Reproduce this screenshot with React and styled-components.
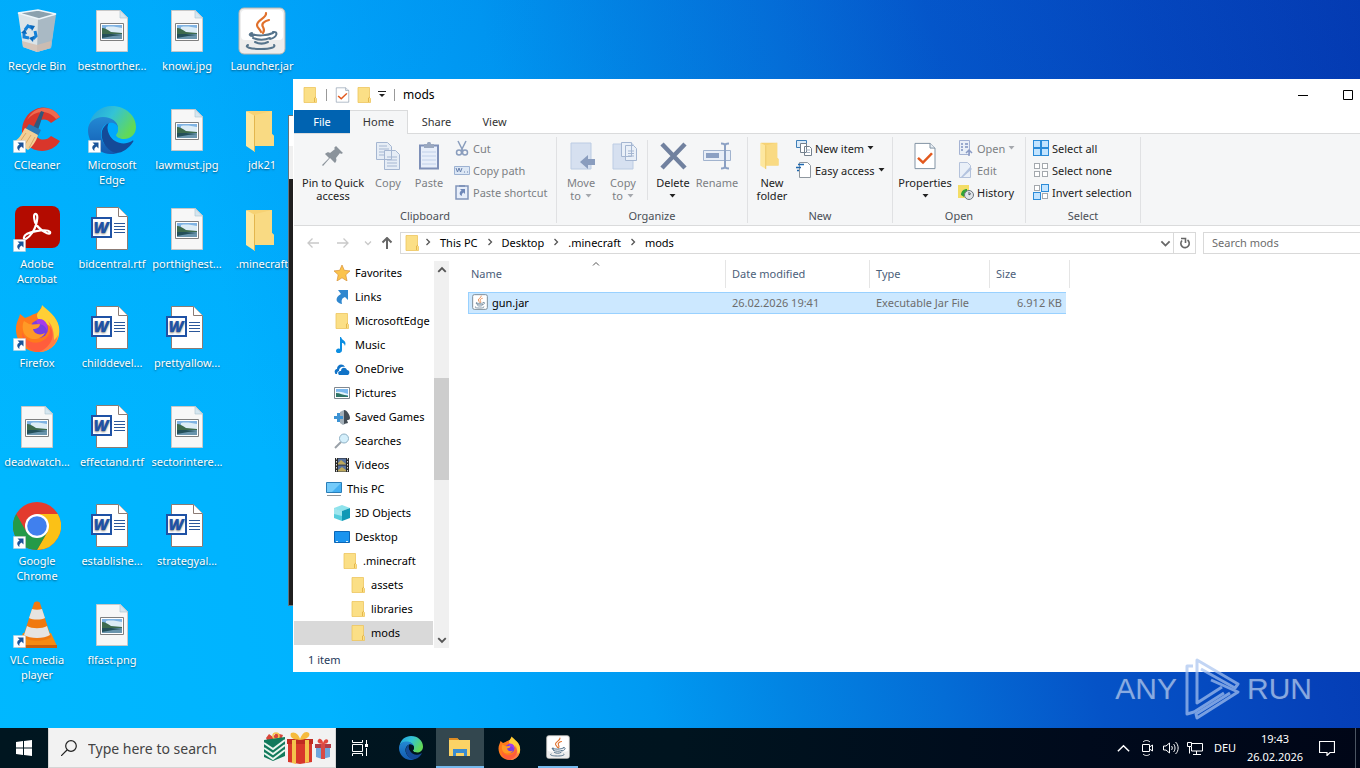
import styled, { createGlobalStyle } from "styled-components";

const GlobalStyle = createGlobalStyle`
    * {
        box-sizing: border-box;
    }

    body {
        margin: 0;
        overflow: hidden;
        font-family: "Noto Sans", "Open Sans", sans-serif;
        font-size: 11px;
        color: #000;
    }

    button, input {
        margin: 0;
        padding: 0;
        border: 0;
        background: none;
        font: inherit;
        color: inherit;
    }

    svg {
        display: block;
        flex: none;
    }
`

const Screen = styled.div`
    display: flex;
    flex-direction: column;
    height: 100vh;
    background:
        linear-gradient(180deg, rgba(0, 110, 225, 0.12) 0%, rgba(0, 110, 225, 0) 60%),
        linear-gradient(76deg, #00b8ff 0%, #00b3ff 22%, #00a7fb 33%, #009af2 43%, #0284e3 52%, #046dd6 62%, #0553c7 72%, #0541b9 86%, #0434ac 100%);
`

const Desktop = styled.main`
    position: relative;
    flex: 1;
    display: flex;
    min-height: 0;
    overflow: hidden;
`

const IconColumn = styled.div`
    display: flex;
    flex-direction: column;
    width: 75px;
    padding-right: 1px;
`

const Shortcut = styled.button`
    display: flex;
    flex-direction: column;
    align-items: center;
    gap: 3px;
    height: 99px;
    padding-top: 7px;
    color: #fff;
    line-height: 15px;
    text-align: center;
    text-shadow: 0 1px 2px rgba(0, 0, 0, 0.5);
`

const ShortcutLabel = styled.span`
    max-width: 75px;
`

/* Windows */

const ConsoleWindow = styled.section`
    position: absolute;
    top: 115px;
    left: 288px;
    width: 480px;
    height: 491px;
    display: flex;
    flex-direction: column;
    border: 1px solid #5f7580;
    background: #1f1f1f;
`

const ConsoleTitle = styled.div`
    height: 30px;
    background: #fff;
`

const ConsoleTabs = styled.div`
    height: 33px;
    background: #f0f0f0;
`

const ExplorerWindow = styled.section`
    position: absolute;
    top: 79px;
    left: 293px;
    right: -11px;
    bottom: 56px;
    display: flex;
    flex-direction: column;
    padding-left: 1px;
    background: #fff;
`

const TitleBar = styled.header`
    display: flex;
    align-items: center;
    height: 31px;
    padding-left: 8px;
    font-size: 12px;
`

const QuickAccess = styled.div`
    display: flex;
    align-items: center;
    flex: 1;
    gap: 6px;
`

const Bar = styled.span`
    width: 1px;
    height: 12px;
    margin: 0 2px;
    background: #999;
`

const WindowTitle = styled.h1`
    margin: 0;
    font-size: 12px;
    font-weight: 400;
`

const CaptionButton = styled.button`
    display: flex;
    align-items: center;
    justify-content: center;
    width: 45px;
    height: 31px;
    padding-right: 2px;
`

const Tabs = styled.nav`
    display: flex;
    height: 24px;
    border-bottom: 1px solid #dadbdc;
`

const Tab = styled.button`
    width: ${(props) => (props.$file ? 56 : 58)}px;
    height: ${(props) => (props.$active ? 24 : 23)}px;
    padding-bottom: ${(props) => (props.$active ? 3 : 1)}px;
    color: ${(props) => (props.$file ? "#fff" : "#333")};
    background: ${(props) => (props.$file ? "#0063b1" : props.$active ? "#f5f6f7" : "none")};
    border: solid ${(props) => (props.$active ? "#dadbdc" : "transparent")};
    border-width: ${(props) => (props.$file ? "0" : "1px 1px 0 0")};
`

const Ribbon = styled.div`
    display: flex;
    height: 92px;
    padding-top: 3px;
    background: #f5f6f7;
    border-bottom: 1px solid #dadbdc;
`

const Group = styled.section`
    display: flex;
    flex-direction: column;
    flex: none;
    width: ${(props) => props.$width}px;
    height: 86px;
    border-right: 1px solid #e0e1e3;
`

const GroupTools = styled.div`
    display: flex;
    flex: 1;
    padding-left: ${(props) => props.$indent || 0}px;
`

const GroupName = styled.div`
    line-height: 14px;
    color: #4a4f56;
    text-align: center;
`

const BigButton = styled.button`
    display: flex;
    flex-direction: column;
    align-items: center;
    flex: none;
    gap: 6px;
    width: ${(props) => props.$width}px;
    height: 68px;
    padding-top: 5px;
    line-height: 13px;
    color: ${(props) => (props.disabled ? "#7c7f84" : "#222")};
`

const ToolDivider = styled.span`
    width: 1px;
    height: 60px;
    margin: 3px;
    background: #e0e1e3;
`

const SmallTools = styled.div`
    display: flex;
    flex-direction: column;
    align-items: flex-start;
    padding-left: ${(props) => props.$indent || 0}px;
`

const SmallButton = styled.button`
    display: flex;
    align-items: center;
    gap: 3px;
    height: 22px;
    white-space: nowrap;
    color: ${(props) => (props.disabled ? "#7c7f84" : "#222")};
`

const LabelStack = styled.span`
    display: flex;
    flex-direction: column;
    align-items: center;
`

const LabelLine = styled.span`
    display: flex;
    align-items: center;
    gap: 4px;
    height: 13px;
`

const AddressRow = styled.div`
    display: flex;
    align-items: center;
    height: 34px;
    padding-left: 7px;
`

const NavButton = styled.button`
    display: flex;
    align-items: center;
    justify-content: center;
    width: ${(props) => props.$width}px;
    height: 22px;
`

const PathBox = styled.div`
    display: flex;
    align-items: center;
    flex: 1;
    height: 22px;
    margin-left: 2px;
    padding-left: 3px;
    border: 1px solid #d9d9d9;
`

const Crumbs = styled.div`
    display: flex;
    align-items: center;
    flex: 1;
    gap: 8px;
    padding: 0 0 2px 4px;
`

const RefreshButton = styled(NavButton)`
    border-left: 1px solid #d9d9d9;
    height: 20px;
`

const SearchMods = styled.input`
    width: 168px;
    height: 22px;
    margin-left: 7px;
    padding: 0 0 2px 8px;
    border: 1px solid #d9d9d9;
    outline: 0;

    &::placeholder {
        color: #6d6d6d;
        opacity: 1;
    }
`

const Content = styled.div`
    display: flex;
    flex: 1;
    min-height: 0;
`

const Tree = styled.ul`
    width: 139px;
    margin: 0;
    padding: 1px 0 0;
    overflow: hidden;
    list-style: none;
`

const TreeItem = styled.li`
    display: flex;
    align-items: center;
    gap: 5px;
    height: 24px;
    padding-bottom: 1px;
    padding-left: ${(props) => 32 + props.$level * 8}px;
    line-height: 15px;
    white-space: nowrap;
    background: ${(props) => (props.$selected ? "#d9d9d9" : "none")};
`

const ScrollBar = styled.div`
    display: flex;
    flex-direction: column;
    align-items: center;
    width: 15px;
    margin: 1px 19px 0 1px;
    background: #f0f0f0;
`

const ScrollArrow = styled.button`
    display: flex;
    align-items: center;
    justify-content: center;
    width: 15px;
    height: 17px;
`

const ScrollTrack = styled.div`
    display: grid;
    grid-template-rows: 100fr 102fr 151fr;
    flex: 1;
    width: 15px;
`

const ScrollThumb = styled.div`
    grid-row: 2;
    background: #cdcdcd;
`

const FileTable = styled.table`
    align-self: flex-start;
    table-layout: fixed;
    width: 602px;
    border-spacing: 0;
    text-align: left;
`

const HeadCell = styled.th`
    position: relative;
    height: 28px;
    padding: 0 0 2px ${(props) => props.$pad || 6}px;
    border-right: 1px solid #e5e5e5;
    font-weight: 400;
    color: #4c607a;
`

const SortMark = styled.span`
    position: absolute;
    top: 0;
    left: 50%;
    margin-left: -5px;
`

const Spacer = styled.tr`
    height: 4px;
`

const Cell = styled.td`
    height: 22px;
    padding: 0 4px 2px 6px;
    border: solid #99d1ff;
    border-width: 1px 0;
    background: #cce8ff;
    color: #6d6d6d;
    text-align: ${(props) => (props.$right ? "right" : "left")};
`

const NameCell = styled(Cell)`
    padding-left: 3px;
    border-left-width: 1px;
    color: #000;
`

const FileName = styled.div`
    display: flex;
    align-items: center;
    gap: 4px;
`

const StatusBar = styled.footer`
    height: 24px;
    padding-left: 14px;
    line-height: 23px;
    color: #1e395b;
`

const Watermark = styled.div`
    position: absolute;
    right: 48px;
    bottom: 6px;
    display: flex;
    align-items: center;
    gap: 6px;
    font-family: "Liberation Sans", sans-serif;
    font-size: 30px;
    line-height: 66px;
    color: rgba(185, 208, 245, 0.7);
    text-shadow: 0 0 2px rgba(120, 130, 150, 0.3);
`

/* Taskbar */

const Taskbar = styled.footer`
    display: flex;
    height: 40px;
    color: #fff;
    background: linear-gradient(90deg, #001620 0%, #00141f 50%, #000a1c 80%, #000617 100%);
`

const TaskButton = styled.button`
    display: flex;
    align-items: center;
    justify-content: center;
    width: 48px;
    height: 40px;
    margin-right: ${(props) => props.$gap || 0}px;
    background: ${(props) => (props.$active ? "#33474f" : "none")};
    border-bottom: ${(props) => (props.$active ? "2px solid #76b9ed" : 0)};
`

const RunningButton = styled(TaskButton)`
    width: 40px;
    margin-left: 5px;
    border-bottom: 2px solid #76b9ed;
`

const TaskSearch = styled.label`
    display: flex;
    align-items: center;
    gap: 11px;
    width: 288px;
    padding: 0 4px 0 12px;
    border: 1px solid #d5d5d5;
    border-top-color: #f2f2f2;
    background: #f2f2f2;
`

const TaskSearchInput = styled.input`
    flex: 1;
    min-width: 0;
    font-size: 14px;
    outline: 0;

    &::placeholder {
        color: #444;
        opacity: 1;
    }
`

const Tray = styled.div`
    display: flex;
    align-items: center;
    margin-left: auto;
`

const TrayButton = styled.button`
    display: flex;
    align-items: center;
    justify-content: center;
    width: ${(props) => props.$width}px;
    height: 40px;
    line-height: 18px;
`

const ShowDesktop = styled.button`
    width: 5px;
    height: 40px;
    margin-left: 8px;
    border-left: 1px solid #4b5562;
`

/* Icons */

const LinkArrow = () => (
    <g transform="translate(0 34)">
        <path d="M.5.5h12v12H.5z" fill="#fff" stroke="#c5ccd2" strokeWidth=".5" />
        <path d="M4.500 2.500h6v6l-2-2c-2 1.500-2.500 2.500-2 4.500-3-2-3-5 0-6.500z" fill="#1b5499" />
    </g>
)

const RecycleBin = () => (
    <svg width="48" height="48" viewBox="0 0 48 48">
        <path d="M5 6l5 34 14 5 14-4 4-33-17 3z" fill="#dbe4e8" />
        <path d="M25 11l-1 34 14-4 5-33z" fill="#a9b9c4" />
        <path d="M9 34l15 4 14-4-1 7-13 4-14-5z" fill="#d3bdae" opacity=".8" />
        <path d="M5 6l20-3 18 4-17 5z" fill="#8ba1ae" stroke="#eef6fa" strokeWidth="1.500" />
        <g fill="none" stroke="#1481d8" strokeWidth="3">
            <path d="M12 23l3-4 4 2M22 24l1 5-3 3M16 31l-5-1v-5" />
        </g>
        <path d="M17 18l5 1-3 5zM20 35l-4-4 5-2zM8 26l4-4 2 5z" fill="#0a69bd" />
    </svg>
)

const PhotoFile = () => (
    <svg width="48" height="48" viewBox="0 0 48 48">
        <path d="M8.500 3.500h24l7 7v34h-31z" fill="#f7f7f7" stroke="#c8c8c8" />
        <path d="M32 3.500v7.500h7.500z" fill="#d5e6f0" stroke="#b3c7d2" strokeWidth=".7" />
        <path d="M12.500 16.500h23v17h-23z" fill="#fff" stroke="#7f7f7f" />
        <path d="M14 18h20v14H14z" fill="#7fb3e3" />
        <path d="M18 20c5-1 11 0 16 1v5H18z" fill="#dcecf6" />
        <path d="M14 21c3 0 6 2 9 4l11 1v2H14z" fill="#3d6a4d" />
        <path d="M14 27h20v5H14z" fill="#6b95ad" />
        <path d="M14 27h9l11 1-9 1-11 2z" fill="#234f59" />
    </svg>
)

const WordFile = () => (
    <svg width="48" height="48" viewBox="0 0 48 48">
        <path d="M8.500 2.500h22l9 9v33h-31z" fill="#fff" stroke="#8b7b74" />
        <path d="M30.500 2.500v9h9" fill="#fff" stroke="#8b7b74" />
        <path d="M26 18.500h11M26 21.500h11M26 24.500h11M26 27.500h11" stroke="#2b579a" strokeWidth="1.100" />
        <path d="M4 13h19v19H4z" fill="#fff" stroke="#1f52a5" strokeWidth="2" />
        <text x="13" y="28" textAnchor="middle" fontFamily="Open Sans" fontSize="16" fontWeight="800" fontStyle="italic" fill="#1f52a5">W</text>
    </svg>
)

const JavaArt = () => (
    <g fill="none" strokeLinecap="round">
        <path d="M28 6c1 5-9 7-9 12 0 3 3 4 4 7M31 13c-5 1-8 4-6 7 1 2 2 3 0 6" stroke="#e0702b" strokeWidth="2.200" />
        <path d="M13 27c6 2 16 2 22-1M14 26c-4 1-2 3 1 3M15 31c5 2 12 2 17 0M17 35c4 2 9 2 13 0M35 25c5-1 5 5-3 7M10 38c-4 2 2 4 13 4 10 0 15-2 13-4" stroke="#56748c" strokeWidth="2" />
    </g>
)

const JavaIcon = ({ size = 48 }) => (
    <svg width={size} height={size} viewBox="0 0 48 48">
        <rect x="1" y="1" width="46" height="46" rx="5" fill="#ededed" stroke="#b9b4ae" />
        <rect x="3" y="3" width="42" height="30" rx="4" fill="#fff" />
        <JavaArt />
    </svg>
)

const JarFile = () => (
    <svg width="16" height="16" viewBox="0 0 48 48">
        <rect x="2" y="2" width="44" height="44" rx="5" fill="#fff" stroke="#7d8d99" strokeWidth="3" />
        <JavaArt />
    </svg>
)

const CCleaner = () => (
    <svg width="48" height="48" viewBox="0 0 48 48">
        <path d="M47 11l-9 6c-6-7-17-3-17 7 0 9 11 13 17 6l9 5c-7 12-24 13-33 4C5 30 8 9 23 3c9-4 19 0 24 8z" fill="#d9362b" />
        <path d="M47 11l-4 2C35 3 22 4 14 14 18 6 24 2 31 2c7 0 12 3 16 9z" fill="#ee6a50" />
        <path d="M28 5l3 1-6 18-5-2z" fill="#31587c" />
        <path d="M16 18l12 6-3 6-13-6z" fill="#2b7ab8" />
        <path d="M12 22l13 7c-2 7-6 12-10 15L2 35c5-3 7-8 10-13z" fill="#f3cf95" />
        <path d="M13 27L6 37M18 29l-7 11M22 31l-6 11" stroke="#d8a868" strokeWidth="1" />
        <LinkArrow />
    </svg>
)

const EdgeIcon = ({ size = 48, link, hole = "#00a8fd" }) => (
    <svg width={size} height={size} viewBox="0 0 48 48">
        <defs>
            <linearGradient id="edgeTop" x1="0" y1="0" x2="1" y2=".5">
                <stop offset="0" stopColor="#1f9fe0" />
                <stop offset=".5" stopColor="#33c3d6" />
                <stop offset="1" stopColor="#62d957" />
            </linearGradient>
            <linearGradient id="edgeSide" x1="0" y1="0" x2="0" y2="1">
                <stop offset="0" stopColor="#2389d4" />
                <stop offset="1" stopColor="#135ab0" />
            </linearGradient>
        </defs>
        <path d="M1 20C3 7 13 0 24 0c14 0 24 10 24 21 0 8-6 12-12 12-5 0-8-2-8-4 0-1 2-2 2-6 0-6-6-11-14-11C8 12 3 15 1 20z" fill="url(#edgeTop)" />
        <path d="M0 24c0-8 7-13 15-13 9 0 15 5 15 11-1-3-4-5-8-5-5 0-9 5-9 11 0 9 7 16 17 19-3 1-6 1-8 1C9 47 0 36 0 24z" fill="url(#edgeSide)" />
        <path d="M14 25c1-4 4-7 7-8-2 3-2 7 0 11 4 9 15 12 23 7 1-1 2 0 1 1-4 6-10 11-17 11-8-2-16-11-14-22z" fill="#144a98" />
        <path d="M21 17c5-1 9 2 9 6 0 4-2 5-2 6 0 2 3 4 8 4-6 2-12-1-15-6-1-4-2-7 0-10z" fill={hole} />
        {link && <LinkArrow />}
    </svg>
)

const Acrobat = () => (
    <svg width="48" height="48" viewBox="0 0 48 48">
        <rect x="2" y="1" width="45" height="42" rx="8" fill="#b30b00" />
        <path d="M22 9c5-1 1 14-3 19-4 6-9 8-8 4 1-5 23-9 26-5 2 5-12-2-15-10-1-4-2-7 0-8z" fill="none" stroke="#fff" strokeWidth="2.200" />
        <LinkArrow />
    </svg>
)

const FirefoxIcon = ({ size = 48, link }) => (
    <svg width={size} height={size} viewBox="0 0 48 48">
        <path d="M3 25c0-7 3-10 4-15l5 4 5-2c5-3 9-2 12-10 4 4 5 7 10 9 6 5 8 13 7 20-2 11-11 17-21 17C12 48 3 38 3 25z" fill="#ff7a1c" />
        <path d="M29 1c5 5 15 11 17 22 2 13-7 25-20 25 10-4 17-14 12-24-3-6-14-6-14-12 0-5 5-6 5-11z" fill="#ffcf35" />
        <path d="M35 17c5 9 1 18-8 21-9 3-18-4-18-12 0 15 8 22 17 22 10 0 18-7 19-17-2 4-4 5-4 5 0-7-1-14-6-19z" fill="#ff4a52" opacity=".6" />
        <circle cx="26" cy="25" r="9" fill="#7a3ee0" />
        <path d="M16 20c4 1 7 0 11 0 0 3-3 5-7 5 1 5 7 7 12 4-5 9-20 8-22-3-1-6 1-9 1-9z" fill="#ff9a26" />
        <path d="M25 15c8-1 11 7 9 13 0-4-3-8-9-8-2-2-2-4 0-5z" fill="#a53bea" />
        {link && <LinkArrow />}
    </svg>
)

const ChromeIcon = () => (
    <svg width="48" height="48" viewBox="0 0 48 48">
        <circle cx="24" cy="24" r="24" fill="#e33b2e" />
        <path d="M24 12h20.800A24 24 0 0124 48l10.400-18z" fill="#fbc116" />
        <path d="M3.200 12L13.600 30 24 36l10.400-6L24 48A24 24 0 013.200 12z" fill="#249a48" />
        <circle cx="24" cy="24" r="12" fill="#fff" />
        <circle cx="24" cy="24" r="9.800" fill="#4080ee" />
        <LinkArrow />
    </svg>
)

const VlcIcon = () => (
    <svg width="48" height="48" viewBox="0 0 48 48">
        <path d="M10 32h28l6 13H5z" fill="#f58a12" />
        <path d="M5 44h39v3H5z" fill="#c95f0b" />
        <path d="M21 2c1-2 5-2 6 0l11 34c-5 5-23 5-28 0z" fill="#f0790f" />
        <path d="M19 8c3 1 7 1 10 0l3 9c-4 2-12 2-16 0zM14 25c5 3 15 3 20 0l3 9c-6 4-20 4-26 0z" fill="#e6e4e1" />
        <LinkArrow />
    </svg>
)

const BigFolder = ({ width = 48, height = 48, viewBox = "0 0 48 48" }) => (
    <svg width={width} height={height} viewBox={viewBox}>
        <path d="M9 5h25v23l2 2v10H15z" fill="#f6d274" />
        <path d="M34 5v23l2 2v10H17V9z" fill="#f9da83" />
        <path d="M8 5l9 5v36l-9-6z" fill="#fde79f" />
        <path d="M17 10v36l-1-1V9z" fill="#e3b64d" />
    </svg>
)

const Folder = () => (
    <svg width="16" height="16" viewBox="0 0 16 16">
        <path d="M2 .5h11.500v10l1 1v4H2z" fill="#fbdf86" stroke="#edc55e" strokeWidth=".8" />
        <path d="M12.500 15v-4l1.500-1" fill="none" stroke="#dfad3e" strokeWidth=".8" />
    </svg>
)

const CheckPage = ({ width = 16, height = 16 }) => (
    <svg width={width} height={height} viewBox="0 0 24 30" preserveAspectRatio="none">
        <path d="M2 1.500h15l5 5v22H2z" fill="#fff" stroke="#7d8fa1" />
        <path d="M17 1.500v5h5" fill="#e8eef4" stroke="#7d8fa1" />
        <path d="M5 17l5 5 9-10" fill="none" stroke="#e2581d" strokeWidth="2.500" />
    </svg>
)

const Caret = ({ light }) => (
    <svg width="7" height="4" viewBox="0 0 7 4">
        <path d="M.5 0h6l-3 3.500z" fill={light ? "#a5a8ad" : "#222"} />
    </svg>
)

const PinIcon = () => (
    <svg width="28" height="28" viewBox="0 0 28 28">
        <path d="M17 4l7 7-2 1-1-1-4 5c1 2 0 4-1 5l-5-5-7 8-1-1 7-7-4-4c2-2 4-2 5-1l5-4-1-1z" fill="#8b939b" />
    </svg>
)

const CopyIcon = () => (
    <svg width="28" height="28" viewBox="0 0 28 28">
        <g fill="#e6edf6" stroke="#a5b6d1">
            <path d="M2.500.500h11l4 4v13h-15zM10.500 8.500h11l4 4v15h-15z" />
            <path d="M5 4h8M5 7h10M5 10h5M5 13h5M13 15h10M13 18h10M13 21h10M13 24h10" />
        </g>
    </svg>
)

const PasteIcon = () => (
    <svg width="28" height="28" viewBox="0 0 28 28">
        <path d="M5 3.500h18v23H5z" fill="#e7eefa" stroke="#7e90b8" strokeWidth="2" />
        <path d="M9 2h3c0-3 4-3 4 0h3v4H9z" fill="#9aa8c0" />
        <path d="M7 10h14M7 14h14M7 18h14M7 22h14" stroke="#c0d0e9" />
    </svg>
)

const CutIcon = () => (
    <svg width="16" height="16" viewBox="0 0 16 16">
        <g fill="none" stroke="#8a9dbd" strokeWidth="1.500">
            <path d="M4 1l5 10M12 1L7 11" />
            <circle cx="5" cy="12.500" r="2.500" />
            <circle cx="11" cy="12.500" r="2.500" />
        </g>
    </svg>
)

const CopyPathIcon = () => (
    <svg width="16" height="16" viewBox="0 0 16 16">
        <path d="M.5 4.500h15v8H.5z" fill="#dce7f5" stroke="#9db2d2" />
        <path d="M2 6l1.500 4L5 6l1.500 4L8 6M10 10h1M13 10h1" fill="none" stroke="#6881ae" />
    </svg>
)

const PasteShortcutIcon = () => (
    <svg width="16" height="16" viewBox="0 0 16 16">
        <path d="M2 2h12v13H2z" fill="#e7eefa" stroke="#8195bb" strokeWidth="1.500" />
        <path d="M5 1h6v2H5z" fill="#8195bb" />
        <path d="M6 5h5v5L9.500 8.500C8 9.500 7.500 10.500 8 12 5 11 5 8 7.500 6.500z" fill="#6f88b8" />
    </svg>
)

const MoveIcon = () => (
    <svg width="28" height="28" viewBox="0 0 28 28">
        <path d="M4 1h20v26H4z" fill="#d6e0f0" stroke="#bccce3" />
        <path d="M28 17v6h-7v4l-8-7 8-7v4z" fill="#8a9dbe" />
    </svg>
)

const CopyToIcon = () => (
    <svg width="28" height="28" viewBox="0 0 28 28">
        <path d="M4 2h20v25H4z" fill="#d6e0f0" stroke="#bccce3" />
        <g fill="#eaf0f8" stroke="#a5b6d1">
            <path d="M12.500.500h10v14h-10zM16.500 3.500h8l3 3v12h-11z" />
            <path d="M19 9h6M19 11.500h6M19 14h6" />
        </g>
    </svg>
)

const DeleteIcon = () => (
    <svg width="28" height="28" viewBox="0 0 28 28">
        <path d="M3 2l23 24M26 2L3 26" stroke="#71819f" strokeWidth="4.500" />
    </svg>
)

const RenameIcon = () => (
    <svg width="28" height="28" viewBox="0 0 28 28">
        <path d="M.5 8.500h27v10H.5z" fill="#e8eef7" stroke="#a1b3ce" />
        <path d="M3 11h13v5H3z" fill="#8ba0c3" />
        <path d="M18 1.500c2 0 4 .5 4 2v21c0 1.500-2 2-4 2M26 1.500c-2 0-4 .5-4 2M22 24.500c0 1.500 2 2 4 2" fill="none" stroke="#8ba0c3" strokeWidth="2" />
    </svg>
)

const NewItemIcon = () => (
    <svg width="16" height="16" viewBox="0 0 16 16">
        <path d="M.5 .5h10v7H.5z" fill="#dcebf8" stroke="#3f7fb8" />
        <path d="M4.500 3.500h6v9h-6zM8.500 6.500h5l2 2v7h-7z" fill="#fff" stroke="#74808c" />
        <path d="M10 10h4M10 12.500h4" stroke="#a4b2c2" />
    </svg>
)

const EasyAccessIcon = () => (
    <svg width="16" height="16" viewBox="0 0 16 16">
        <path d="M3.500.500h8l3 3v12h-11z" fill="#fff" stroke="#8f979f" />
        <path d="M2 2.500h6M0 5.500h5M1 8.500h2" stroke="#1f69b0" strokeWidth="1.500" />
    </svg>
)

const OpenIcon = () => (
    <svg width="16" height="16" viewBox="0 0 16 16">
        <path d="M1.500.500h10v14h-10z" fill="#eaf0f8" stroke="#a5b3d3" />
        <path d="M3 4h2M3 7h2M3 10h2M7 4h3M7 7h3" stroke="#7f92c0" strokeWidth="1.500" />
        <path d="M11 16v-5M8 13l3-3 3 3" fill="none" stroke="#8a9bc5" strokeWidth="1.500" />
    </svg>
)

const EditIcon = () => (
    <svg width="16" height="16" viewBox="0 0 16 16">
        <path d="M1.500.500h8l3 3v12h-11z" fill="#eaf0f8" stroke="#b4c2db" />
        <path d="M3 15L12 5l2 2-9 8z" fill="#b3c3df" />
    </svg>
)

const HistoryIcon = () => (
    <svg width="16" height="16" viewBox="0 0 16 16">
        <path d="M0 1h11v13H0z" fill="#f3dd67" />
        <path d="M3 11c0-4 3-6 6-6v3c-2 0-3 2-3 5z" fill="#32a336" />
        <circle cx="11" cy="11" r="4.500" fill="#dfe4e8" stroke="#6a747d" />
        <path d="M11 8v3l2-1.500" fill="none" stroke="#4c5660" />
    </svg>
)

const GridIcon = ({ filled }) => (
    <svg width="16" height="16" viewBox="0 0 16 16">
        {[[0, 0], [8, 0], [0, 8], [8, 8]].map(([x, y], i) =>
            filled.includes(i) ? (
                <rect key={i} x={x + 0.5} y={y + 0.5} width="7" height="7" fill="#c3e4ff" stroke="#2b8bd8" />
            ) : (
                <rect key={i} x={x + 1.5} y={y + 1.5} width="5" height="5" fill="#fff" stroke="#a3a8ad" />
            )
        )}
    </svg>
)

const Arrow = ({ rotate = 0, color }) => (
    <svg width="14" height="12" viewBox="0 0 14 12">
        <path d="M13 6H2M6.500 1.500L2 6l4.500 4.500" fill="none" stroke={color} strokeWidth={rotate === 90 ? 2 : 1.300} transform={`rotate(${rotate} 7 6)`} />
    </svg>
)

const Chevron = ({ rotate = 0, color = "#555", width = 1.3, size = 8 }) => (
    <svg width={size} height={size} viewBox="0 0 8 8">
        <path d="M2.500 1l3 3-3 3" fill="none" stroke={color} strokeWidth={width} transform={`rotate(${rotate} 4 4)`} />
    </svg>
)

const treeIcons = {
    star: <path d="M8 0l2.300 5.300 5.700.6-4.200 3.900L13 16l-5-3.200L3 16l1.200-6.200L0 5.900l5.700-.6z" fill="#fbc34c" stroke="#d8923a" strokeWidth=".7" />,
    link: <path d="M4 1h10v10l-3-3c-3 1-4 3-3 7-6-1-8-6-1-10z" fill="#2f87cf" />,
    music: <path d="M7 0c1 4 6 3 4 9-1-3-2-3-3-3v7c0 4-6 4-6 1 0-2 2-3 4-2V0z" fill="#0c8ee2" />,
    cloud: (
        <g fill="#1173c7">
            <path d="M1 12c-1-3 1-4 2-4 0-5 6-6 8-2-4-1-6 1-6 4-1 0-2 1-2 3-1 0-2 0-2-1z" />
            <path d="M5 14c-2-3 0-4 2-4 0-4 5-4 6-1 3 0 3 4 1 5z" />
        </g>
    ),
    picture: (
        <g>
            <path d="M.5 2.500h15v11H.5z" fill="#fff" stroke="#808890" />
            <path d="M2 4h12v8H2z" fill="#7bb8ee" />
            <path d="M2 7c5-1 8 1 12 2v1H2z" fill="#e4f3fb" />
            <path d="M2 8c4 0 7 2 12 3v1H2z" fill="#2f7466" />
        </g>
    ),
    games: (
        <g>
            <path d="M6 3l4-2 1 1v13l-2 1-3-2z" fill="#a3afb8" />
            <path d="M10 1c3 0 6 5 6 8 0 2-2 2-3 2l1 3-4 1z" fill="#434c54" />
            <path d="M0 7h3V4h3v3h3v3H6v3H3v-3H0z" fill="#3d93d4" />
        </g>
    ),
    search: (
        <g>
            <path d="M7 9l-6 6" stroke="#9aa1a8" strokeWidth="2" />
            <circle cx="10" cy="5.500" r="4.500" fill="#d4effb" stroke="#8fb1c5" />
        </g>
    ),
    film: (
        <g>
            <path d="M1 1h14v14H1z" fill="#292929" />
            <path d="M4 1.500h8v6H4zM4 8.500h8v6H4z" fill="#56719e" />
            <path d="M4 6l3-3 5 4v.5H4zM4 13l4-3 4 3v1.500H4z" fill="#bda85b" />
            <path d="M2.500 1v14M13.500 1v14" stroke="#ddd" strokeDasharray="1.500 1.500" />
        </g>
    ),
    pc: (
        <g>
            <path d="M.5 1.500h15v10H.5z" fill="#45b0f2" stroke="#2a7eb8" />
            <path d="M1 2h14L6 11H1z" fill="#74cbfa" />
            <path d="M1 14.500h14" stroke="#8d9499" />
        </g>
    ),
    cube: (
        <g>
            <path d="M0 3l8-3 8 3-8 3z" fill="#8fe3ec" />
            <path d="M0 3l8 3v10l-8-3z" fill="#55cddd" />
            <path d="M16 3L8 6v10l8-3z" fill="#1199b5" />
            <path d="M0 3l8 3v5l-8-2z" fill="#9ee6ee" />
        </g>
    ),
    desktop: (
        <g>
            <path d="M.5 2.500h15v11H.5z" fill="#1a94ef" stroke="#0b66b7" />
            <path d="M2 12.500h2M12 12.500h2" stroke="#d8efff" />
        </g>
    ),
}

const TreeIcon = ({ name }) =>
    name === "folder" ? <Folder /> : <svg width="16" height="16" viewBox="0 0 16 16">{treeIcons[name]}</svg>

const GiftsIcon = () => (
    <svg width="68" height="34" viewBox="0 0 68 34">
        <path d="M3 7l3-4 4 3 3-4 7 2-2 5H4z" fill="#d8453a" />
        <circle cx="13" cy="5" r="3" fill="none" stroke="#f6c552" strokeWidth="1.500" />
        <path d="M1 9l21-3v19l-12 5-9-4z" fill="#127a5c" />
        <path d="M1 12l9 6 12-9M1 17l9 6 12-9M1 22l9 6 12-9" fill="none" stroke="#e9f5ee" strokeWidth="2" />
        <path d="M24 8h26v5H24z" fill="#bf2a21" />
        <path d="M25 13h24v18l-12 2-12-2z" fill="#d8372b" />
        <path d="M29 9h4v24l-4-1zM42 9h4v22l-4 1z" fill="#f4c24c" />
        <path d="M37 9c-6 0-11-2-9-7 4-2 8 2 9 6 2-5 5-9 9-6 2 4-4 7-9 7z" fill="#f6bb3d" />
        <path d="M53 15h14v11l-8 2-6-2z" fill="#6ea6dc" />
        <path d="M52 13h16v4H52z" fill="#b23e48" />
        <path d="M58 13h4v15h-4z" fill="#d84b45" />
        <path d="M60 13c-5 0-7-3-4-5 2-1 4 2 4 4 1-3 3-5 5-3 1 3-2 4-5 4z" fill="#e3483d" />
    </svg>
)

const ExplorerIcon = () => (
    <svg width="24" height="20" viewBox="0 0 24 20">
        <path d="M1 1h8l2 2h11v16H1z" fill="#fbd366" />
        <path d="M1 1h8l2 2H1z" fill="#dd8b22" />
        <path d="M5 19v-7h14v7h-3v-3H8v3z" fill="#3b8ccf" />
    </svg>
)

const StartIcon = () => (
    <svg width="16" height="16" viewBox="0 0 16 16">
        <path d="M0 2l7-1v6.500H0zM8 1l8-1v7.500H8zM0 8.500h7V15l-7-1zM8 8.500h8V16l-8-1z" fill="#fff" />
    </svg>
)

const TaskViewIcon = () => (
    <svg width="18" height="16" viewBox="0 0 18 16">
        <path d="M1.500 0v2.500h10V0M1.500 16v-2.500h10V16M1.500 4.500h10v7h-10zM15.500 0v4M15.500 8v8" fill="none" stroke="#fff" />
        <path d="M14 4h3v3h-3z" fill="#fff" />
    </svg>
)

const Logo = () => (
    <svg width="58" height="64" viewBox="0 0 58 64">
        <g fill="none" stroke="#a9c4f0" strokeWidth="3" strokeLinejoin="round" opacity=".7">
            <path d="M10 9H4v48l7-2 30-19" />
            <path d="M39 30L14 46V3l41 24-3 4-34-19" />
            <path d="M28 23l27 12-41 26-1-4 34-21" />
        </g>
    </svg>
)

/* Data */

const desktopColumns = [
    [
        ["Recycle Bin", <RecycleBin />],
        ["CCleaner", <CCleaner />],
        ["Adobe Acrobat", <Acrobat />],
        ["Firefox", <FirefoxIcon link />],
        ["deadwatch...", <PhotoFile />],
        ["Google Chrome", <ChromeIcon />],
        ["VLC media player", <VlcIcon />],
    ],
    [
        ["bestnorther...", <PhotoFile />],
        ["Microsoft Edge", <EdgeIcon link />],
        ["bidcentral.rtf", <WordFile />],
        ["childdevel...", <WordFile />],
        ["effectand.rtf", <WordFile />],
        ["establishe...", <WordFile />],
        ["flfast.png", <PhotoFile />],
    ],
    [
        ["knowi.jpg", <PhotoFile />],
        ["lawmust.jpg", <PhotoFile />],
        ["porthighest...", <PhotoFile />],
        ["prettyallow...", <WordFile />],
        ["sectorintere...", <PhotoFile />],
        ["strategyal...", <WordFile />],
    ],
    [
        ["Launcher.jar", <JavaIcon />],
        ["jdk21", <BigFolder />],
        [".minecraft", <BigFolder />],
    ],
]

const treeItems = [
    ["Favorites", "star", 1],
    ["Links", "link", 1],
    ["MicrosoftEdge", "folder", 1],
    ["Music", "music", 1],
    ["OneDrive", "cloud", 1],
    ["Pictures", "picture", 1],
    ["Saved Games", "games", 1],
    ["Searches", "search", 1],
    ["Videos", "film", 1],
    ["This PC", "pc", 0],
    ["3D Objects", "cube", 1],
    ["Desktop", "desktop", 1],
    [".minecraft", "folder", 2],
    ["assets", "folder", 3],
    ["libraries", "folder", 3],
    ["mods", "folder", 3],
]

const MenuLabel = ({ first, second, light }) => (
    <LabelStack>
        <span>{first}</span>
        <LabelLine>{second}<Caret light={light} /></LabelLine>
    </LabelStack>
)

const RibbonTools = () => (
    <Ribbon>
        <Group $width={263}>
            <GroupTools>
                <BigButton $width={78}><PinIcon /><span>Pin to Quick<br />access</span></BigButton>
                <BigButton $width={32} disabled><CopyIcon />Copy</BigButton>
                <BigButton $width={50} disabled><PasteIcon />Paste</BigButton>
                <SmallTools>
                    <SmallButton disabled><CutIcon />Cut</SmallButton>
                    <SmallButton disabled><CopyPathIcon />Copy path</SmallButton>
                    <SmallButton disabled><PasteShortcutIcon />Paste shortcut</SmallButton>
                </SmallTools>
            </GroupTools>
            <GroupName>Clipboard</GroupName>
        </Group>
        <Group $width={191}>
            <GroupTools $indent={3}>
                <BigButton $width={42} disabled><MoveIcon /><MenuLabel first="Move" second="to" light /></BigButton>
                <BigButton $width={42} disabled><CopyToIcon /><MenuLabel first="Copy" second="to" light /></BigButton>
                <ToolDivider />
                <BigButton $width={44}><DeleteIcon /><MenuLabel first="Delete" /></BigButton>
                <BigButton $width={44} disabled><RenameIcon />Rename</BigButton>
            </GroupTools>
            <GroupName>Organize</GroupName>
        </Group>
        <Group $width={145}>
            <GroupTools $indent={3}>
                <BigButton $width={42}><BigFolder width={32} height={28} viewBox="2 4 48 43" /><span>New<br />folder</span></BigButton>
                <SmallTools $indent={3}>
                    <SmallButton><NewItemIcon />New item<Caret /></SmallButton>
                    <SmallButton><EasyAccessIcon />Easy access<Caret /></SmallButton>
                </SmallTools>
            </GroupTools>
            <GroupName>New</GroupName>
        </Group>
        <Group $width={133}>
            <GroupTools $indent={2}>
                <BigButton $width={60}><CheckPage width={24} height={28} /><MenuLabel first="Properties" /></BigButton>
                <SmallTools $indent={3}>
                    <SmallButton disabled><OpenIcon />Open<Caret light /></SmallButton>
                    <SmallButton disabled><EditIcon />Edit</SmallButton>
                    <SmallButton><HistoryIcon />History</SmallButton>
                </SmallTools>
            </GroupTools>
            <GroupName>Open</GroupName>
        </Group>
        <Group $width={115}>
            <GroupTools $indent={7}>
                <SmallTools>
                    <SmallButton><GridIcon filled={[0, 1, 2, 3]} />Select all</SmallButton>
                    <SmallButton><GridIcon filled={[]} />Select none</SmallButton>
                    <SmallButton><GridIcon filled={[1, 2]} />Invert selection</SmallButton>
                </SmallTools>
            </GroupTools>
            <GroupName>Select</GroupName>
        </Group>
    </Ribbon>
)

const Explorer = () => (
    <ExplorerWindow>
        <TitleBar>
            <QuickAccess>
                <Folder />
                <Bar />
                <CheckPage width={15} height={16} />
                <Folder />
                <svg width="8" height="7" viewBox="0 0 8 7"><path d="M0 .5h8" stroke="#222" /><path d="M1 3h6L4 6z" fill="#222" /></svg>
                <Bar />
                <WindowTitle>mods</WindowTitle>
            </QuickAccess>
            <CaptionButton aria-label="Minimize">
                <svg width="10" height="10" viewBox="0 0 10 10"><path d="M0 5.500h10" stroke="#000" /></svg>
            </CaptionButton>
            <CaptionButton aria-label="Maximize">
                <svg width="10" height="10" viewBox="0 0 10 10"><path d="M.5.500h9v9h-9z" fill="none" stroke="#000" /></svg>
            </CaptionButton>
        </TitleBar>
        <Tabs>
            <Tab $file>File</Tab>
            <Tab $active>Home</Tab>
            <Tab>Share</Tab>
            <Tab>View</Tab>
        </Tabs>
        <RibbonTools />
        <AddressRow>
            <NavButton $width={24} aria-label="Back"><Arrow color="#c9c9c9" /></NavButton>
            <NavButton $width={36} aria-label="Forward"><Arrow rotate={180} color="#c9c9c9" /></NavButton>
            <NavButton $width={14} aria-label="Recent locations"><Chevron rotate={90} color="#c9c9c9" /></NavButton>
            <NavButton $width={23} aria-label="Up"><Arrow rotate={90} color="#666" /></NavButton>
            <PathBox>
                <Folder />
                <Crumbs>
                    <Chevron />
                    <span>This PC</span>
                    <Chevron />
                    <span>Desktop</span>
                    <Chevron />
                    <span>.minecraft</span>
                    <Chevron />
                    <span>mods</span>
                </Crumbs>
                <NavButton $width={16} aria-label="Previous locations"><Chevron rotate={90} size={11} color="#666" /></NavButton>
                <RefreshButton $width={22} aria-label="Refresh">
                    <svg width="12" height="12" viewBox="0 0 12 12">
                        <path d="M3 3.500A4.200 4.200 0 108.500 3" fill="none" stroke="#666" strokeWidth="1.600" />
                        <path d="M2 1.500h4.500V6" fill="none" stroke="#666" strokeWidth="1.600" />
                    </svg>
                </RefreshButton>
            </PathBox>
            <SearchMods aria-label="Search mods" placeholder="Search mods" />
        </AddressRow>
        <Content>
            <Tree>
                {treeItems.map(([label, icon, level], i) => (
                    <TreeItem key={i} $level={level} $selected={label === "mods"}>
                        <TreeIcon name={icon} />
                        {label}
                    </TreeItem>
                ))}
            </Tree>
            <ScrollBar>
                <ScrollArrow aria-label="Scroll up"><Chevron rotate={-90} size={10} width={1.5} /></ScrollArrow>
                <ScrollTrack><ScrollThumb /></ScrollTrack>
                <ScrollArrow aria-label="Scroll down"><Chevron rotate={90} size={10} width={1.5} /></ScrollArrow>
            </ScrollBar>
            <FileTable>
                <colgroup>
                    <col width="258" />
                    <col width="144" />
                    <col width="120" />
                    <col width="76" />
                    <col width="4" />
                </colgroup>
                <thead>
                    <tr>
                        <HeadCell $pad={3}>Name<SortMark><Chevron rotate={-90} width={1} /></SortMark></HeadCell>
                        <HeadCell>Date modified</HeadCell>
                        <HeadCell>Type</HeadCell>
                        <HeadCell colSpan={2}>Size</HeadCell>
                    </tr>
                </thead>
                <tbody>
                    <Spacer />
                    <tr>
                        <NameCell><FileName><JarFile />gun.jar</FileName></NameCell>
                        <Cell>26.02.2026 19:41</Cell>
                        <Cell>Executable Jar File</Cell>
                        <Cell $right>6.912 KB</Cell>
                    </tr>
                </tbody>
            </FileTable>
        </Content>
        <StatusBar>1 item</StatusBar>
    </ExplorerWindow>
)

const App = () => (
    <Screen>
        <GlobalStyle />
        <Desktop>
            {desktopColumns.map((column, i) => (
                <IconColumn key={i}>
                    {column.map(([label, icon]) => (
                        <Shortcut key={label}>
                            {icon}
                            <ShortcutLabel>{label}</ShortcutLabel>
                        </Shortcut>
                    ))}
                </IconColumn>
            ))}
            <ConsoleWindow>
                <ConsoleTitle />
                <ConsoleTabs />
            </ConsoleWindow>
            <Explorer />
            <Watermark>
                ANY
                <Logo />
                RUN
            </Watermark>
        </Desktop>
        <Taskbar>
            <TaskButton aria-label="Start"><StartIcon /></TaskButton>
            <TaskSearch>
                <svg width="16" height="16" viewBox="0 0 16 16">
                    <circle cx="10" cy="6" r="5.300" fill="none" stroke="#222" strokeWidth="1.200" />
                    <path d="M6 10l-6 6" stroke="#222" strokeWidth="1.200" />
                </svg>
                <TaskSearchInput aria-label="Type here to search" placeholder="Type here to search" />
                <GiftsIcon />
            </TaskSearch>
            <TaskButton $gap={3} aria-label="Task View"><TaskViewIcon /></TaskButton>
            <TaskButton $gap={1} aria-label="Microsoft Edge"><EdgeIcon size={24} hole="#00141f" /></TaskButton>
            <TaskButton $gap={1} $active aria-label="File Explorer"><ExplorerIcon /></TaskButton>
            <TaskButton aria-label="Firefox"><FirefoxIcon size={24} /></TaskButton>
            <RunningButton aria-label="Java"><JavaIcon size={24} /></RunningButton>
            <Tray>
                <TrayButton $width={24} aria-label="Show hidden icons"><Chevron rotate={-90} color="#fff" width={0.8} size={15} /></TrayButton>
                <TrayButton $width={24} aria-label="Meet Now">
                    <svg width="14" height="16" viewBox="0 0 14 16">
                        <path d="M2.500 4.500h7v7h-7zM9.500 7l3-2v6l-3-2M3 2c2-2 5-2 7 0M3 14c2 2 5 2 7 0" fill="none" stroke="#fff" />
                    </svg>
                </TrayButton>
                <TrayButton $width={24} aria-label="Volume">
                    <svg width="16" height="14" viewBox="0 0 16 14">
                        <path d="M.5 5h2.500l3.500-3v10L3 9H.5zM8.500 5c1 1 1 3 0 4M10.500 3c2 2 2 6 0 8M12.500 1c3.500 3 3.500 9 0 12" fill="none" stroke="#fff" />
                    </svg>
                </TrayButton>
                <TrayButton $width={24} aria-label="Network">
                    <svg width="16" height="14" viewBox="0 0 16 14">
                        <path d="M5 2.500h10.500v7.500h-11V6M.5 1.500h4v4h-4zM2.500 5.500v7M9.500 10v3M6 13.500h8" fill="none" stroke="#fff" />
                    </svg>
                </TrayButton>
                <TrayButton $width={36}>DEU</TrayButton>
                <TrayButton $width={64}>19:43<br />26.02.2026</TrayButton>
                <TrayButton $width={40} aria-label="Notifications">
                    <svg width="16" height="16" viewBox="0 0 16 16">
                        <path d="M.5 1.500h15v11H11l-3 3v-3H.5z" fill="none" stroke="#fff" strokeWidth="1.200" />
                    </svg>
                </TrayButton>
                <ShowDesktop aria-label="Show desktop" />
            </Tray>
        </Taskbar>
    </Screen>
)

export default App;
